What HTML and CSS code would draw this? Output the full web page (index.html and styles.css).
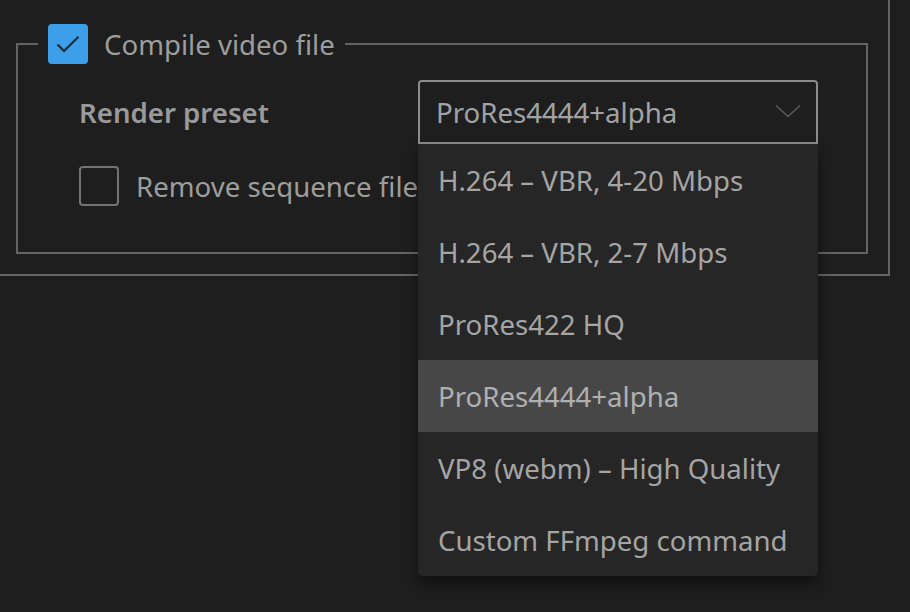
FILE: index.html
```html
<!DOCTYPE html>
<html lang="en">
<head>
    <meta charset="UTF-8">
    <title>Render settings</title>
    <link rel="stylesheet" href="styles.css">
</head>
<body>

    <div class="panel">

        <fieldset class="group">
            <legend class="group-title">
                <span class="check checked">
                    <svg width="40" height="40" viewBox="0 0 40 40">
                        <path d="M9.5 20.5 L16 27 L30.5 12.7" fill="none" stroke="#1f2a33" stroke-width="2.2"/>
                    </svg>
                </span>
                <span>Compile video file</span>
            </legend>

            <div class="row">
                <label class="row-label">Render preset</label>
                <div class="select-wrap">
                    <div class="select">
                        <span>ProRes4444+alpha</span>
                        <svg class="chevron" width="26" height="14" viewBox="0 0 26 14">
                            <path d="M1 1.5 L13 12.5 L25 1.5" fill="none" stroke="#5a5a5a" stroke-width="1.6"/>
                        </svg>
                    </div>
                    <ul class="options">
                        <li>H.264 – VBR, 4-20 Mbps</li>
                        <li>H.264 – VBR, 2-7 Mbps</li>
                        <li>ProRes422 HQ</li>
                        <li class="selected">ProRes4444+alpha</li>
                        <li>VP8 (webm) – High Quality</li>
                        <li>Custom FFmpeg command</li>
                    </ul>
                </div>
            </div>

            <div class="check-row">
                <span class="check"></span>
                <span>Remove sequence files</span>
            </div>
        </fieldset>

    </div>

</body>
</html>
```

FILE: styles.css
```css
html,
body {
    min-height: 100%;
    height: 100%;
}

body {
    margin: 0;
    background-color: #1e1e1e;
    font-family: "Noto Sans", "Open Sans", sans-serif;
    font-size: 27.6px;
    color: #9d9d9d;
}

.panel {
    position: relative;
    width: 872px;
    height: 250px;
    padding: 24px 0 0 16px;
    border-right: 2px solid #646464;
    border-bottom: 2px solid #646464;
}

.group {
    box-sizing: border-box;
    width: 852px;
    margin: 0;
    padding: 0 0 46px 0;
    border: 2px solid #646464;
}

.group-title {
    display: flex;
    align-items: center;
    gap: 16px;
    margin-left: 20px;
    padding: 0 10px;
    height: 40px;
    line-height: 40px;
}

.check {
    box-sizing: border-box;
    width: 40px;
    height: 40px;
    border: 2px solid #737373;
    border-radius: 4px;
    flex-shrink: 0;
}

.check.checked {
    border: none;
    background-color: #3d9fea;
    position: relative;
}

.check.checked svg {
    position: absolute;
    top: 0;
    left: 0;
}

.row {
    display: grid;
    grid-template-columns: 339px 400px;
    align-items: center;
    margin-top: 16px;
    padding-left: 61px;
}

.row-label {
    font-weight: 600;
    color: #9a9a9a;
}

.select-wrap {
    position: relative;
}

.select {
    box-sizing: border-box;
    height: 64px;
    display: flex;
    align-items: center;
    justify-content: space-between;
    padding: 0 15px 0 16px;
    border: 2px solid #8c8c8c;
    border-radius: 4px 4px 0 0;
    color: #a3a3a3;
}

.chevron {
    margin-top: -2px;
}

.options {
    position: absolute;
    top: 64px;
    left: 0;
    width: 400px;
    margin: 0;
    padding: 0;
    list-style: none;
    background-color: #262626;
    border-radius: 0 0 5px 5px;
    box-shadow: 0 8px 14px rgba(0, 0, 0, 0.45);
    z-index: 2;
}

.options li {
    height: 72px;
    line-height: 72px;
    padding-left: 20px;
    color: #a5a5a5;
    white-space: nowrap;
}

.options li.selected {
    background-color: #474747;
    color: #b0b0b0;
}

.check-row {
    display: flex;
    align-items: center;
    gap: 17px;
    margin-top: 22px;
    padding-left: 61px;
    height: 40px;
    white-space: nowrap;
}
```
